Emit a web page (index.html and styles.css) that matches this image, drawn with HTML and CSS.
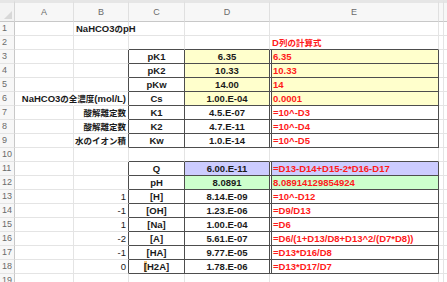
FILE: index.html
```html
<!DOCTYPE html>
<html lang="ja">
<head>
<meta charset="utf-8">
<link rel="stylesheet" href="styles.css">
</head>
<body>
<div class="sheet">
  <div class="corner"><span class="tri"></span></div>
  <div class="hd">A</div><div class="hd">B</div><div class="hd">C</div><div class="hd">D</div><div class="hd">E</div><div class="hd"></div><div class="hd last"></div>

  <div class="rh">1</div><div class="c"></div><div class="c b">NaHCO3<span class="jp">の</span>pH</div><div class="c"></div><div class="c"></div><div class="c"></div><div class="c"></div><div class="c last"></div>

  <div class="rh">2</div><div class="c"></div><div class="c"></div><div class="c bb"></div><div class="c bb"></div><div class="c b red bb">D<span class="jp">列の計算式</span></div><div class="c"></div><div class="c last"></div>

  <div class="rh">3</div><div class="c"></div><div class="c br"></div><div class="c bx b ctr">pK1</div><div class="c bx b ctr yel">6.35</div><div class="c ex b red yel">6.35</div><div class="c"></div><div class="c last"></div>
  <div class="rh">4</div><div class="c"></div><div class="c br"></div><div class="c bx b ctr">pK2</div><div class="c bx b ctr yel">10.33</div><div class="c ex b red yel">10.33</div><div class="c"></div><div class="c last"></div>
  <div class="rh">5</div><div class="c"></div><div class="c br"></div><div class="c bx b ctr">pKw</div><div class="c bx b ctr yel">14.00</div><div class="c ex b red yel">14</div><div class="c"></div><div class="c last"></div>
  <div class="rh">6</div><div class="c hide"></div><div class="c br b rt"><span>NaHCO3<span class="jp">の全濃度</span>(mol/L)</span></div><div class="c bx b ctr">Cs</div><div class="c bx b ctr yel">1.00.E-04</div><div class="c ex b red yel">0.0001</div><div class="c"></div><div class="c last"></div>
  <div class="rh">7</div><div class="c"></div><div class="c br b rt"><span class="jp">酸解離定数</span></div><div class="c bx b ctr">K1</div><div class="c bx b ctr">4.5.E-07</div><div class="c ex b red">=10^-D3</div><div class="c"></div><div class="c last"></div>
  <div class="rh">8</div><div class="c"></div><div class="c br b rt"><span class="jp">酸解離定数</span></div><div class="c bx b ctr">K2</div><div class="c bx b ctr">4.7.E-11</div><div class="c ex b red">=10^-D4</div><div class="c"></div><div class="c last"></div>
  <div class="rh">9</div><div class="c"></div><div class="c br b rt"><span class="jp">水のイオン積</span></div><div class="c bx b ctr">Kw</div><div class="c bx b ctr">1.0.E-14</div><div class="c ex b red">=10^-D5</div><div class="c"></div><div class="c last"></div>

  <div class="rh">10</div><div class="c"></div><div class="c"></div><div class="c bb"></div><div class="c bb"></div><div class="c bb"></div><div class="c"></div><div class="c last"></div>

  <div class="rh">11</div><div class="c"></div><div class="c br"></div><div class="c bx b ctr">Q</div><div class="c bx b ctr lav">6.00.E-11</div><div class="c ex b red lav">=D13-D14+D15-2*D16-D17</div><div class="c"></div><div class="c last"></div>
  <div class="rh">12</div><div class="c"></div><div class="c br"></div><div class="c bx b ctr">pH</div><div class="c bx b ctr grn">8.0891</div><div class="c ex b red grn">8.08914129854924</div><div class="c"></div><div class="c last"></div>
  <div class="rh">13</div><div class="c"></div><div class="c br rt"><span>1</span></div><div class="c bx b ctr">[H]</div><div class="c bx b ctr">8.14.E-09</div><div class="c ex b red">=10^-D12</div><div class="c"></div><div class="c last"></div>
  <div class="rh">14</div><div class="c"></div><div class="c br rt"><span>-1</span></div><div class="c bx b ctr">[OH]</div><div class="c bx b ctr">1.23.E-06</div><div class="c ex b red">=D9/D13</div><div class="c"></div><div class="c last"></div>
  <div class="rh">15</div><div class="c"></div><div class="c br rt"><span>1</span></div><div class="c bx b ctr">[Na]</div><div class="c bx b ctr">1.00.E-04</div><div class="c ex b red">=D6</div><div class="c"></div><div class="c last"></div>
  <div class="rh">16</div><div class="c"></div><div class="c br rt"><span>-2</span></div><div class="c bx b ctr">[A]</div><div class="c bx b ctr">5.61.E-07</div><div class="c ex b red">=D6/(1+D13/D8+D13^2/(D7*D8))</div><div class="c"></div><div class="c last"></div>
  <div class="rh">17</div><div class="c"></div><div class="c br rt"><span>-1</span></div><div class="c bx b ctr">[HA]</div><div class="c bx b ctr">9.77.E-05</div><div class="c ex b red">=D13*D16/D8</div><div class="c"></div><div class="c last"></div>
  <div class="rh">18</div><div class="c"></div><div class="c br rt"><span>0</span></div><div class="c bx b ctr"><span class="mark">[</span>H2A]</div><div class="c bx b ctr">1.78.E-06</div><div class="c ex b red">=D13*D17/D7</div><div class="c"></div><div class="c last"></div>
  <div class="rh">19</div><div class="c"></div><div class="c"></div><div class="c"></div><div class="c"></div><div class="c"></div><div class="c"></div><div class="c last"></div>
</div>
</body>
</html>
```
FILE: styles.css
```css
html, body {
  margin: 0;
  padding: 0;
  background: #ffffff;
}
body {
  width: 447px;
  height: 282px;
  overflow: hidden;
}
.sheet {
  display: grid;
  grid-template-columns: 15px 59px 55px 56px 85px 169px 5px 1fr;
  grid-template-rows: 22px;
  grid-auto-rows: 14px;
  font-family: "Liberation Sans", "Noto Sans CJK JP", sans-serif;
  font-size: 9.5px;
  color: #1a1a1a;
}
.jp {
  font-family: "Noto Sans CJK JP", sans-serif;
  font-size: 8.5px;
}
.corner {
  position: relative;
  background: #f3f3f3;
  border-top: 3px solid #e6e6e6;
  border-right: 1px solid #d6d6d6;
  border-bottom: 1px solid #c8c8c8;
}
.tri {
  position: absolute;
  right: 2px;
  bottom: 2px;
  width: 0;
  height: 0;
  border-left: 8px solid transparent;
  border-bottom: 8px solid #d8d8d8;
}
.hd {
  background: #f7f7f7;
  border-top: 3px solid #e6e6e6;
  border-right: 1px solid #e0e0e0;
  border-bottom: 1px solid #c8c8c8;
  color: #6b6b6b;
  font-size: 9px;
  text-align: center;
  line-height: 18px;
}
.rh {
  background: #f7f7f7;
  border-right: 1px solid #c8c8c8;
  border-bottom: 1px solid #e4e4e4;
  color: #6b6b6b;
  font-size: 9px;
  line-height: 13px;
  padding-left: 2px;
}
.c {
  border-right: 1px solid #e4e4e4;
  border-bottom: 1px solid #e4e4e4;
  line-height: 13px;
  white-space: nowrap;
  padding: 0 2px;
  min-width: 0;
}
.last { border-right: none; }
.hd.last { border-right: none; }
.b { font-weight: bold; }
.ctr { text-align: center; }
.rt {
  display: flex;
  justify-content: flex-end;
  padding-right: 2px;
}
.red { color: #ff1a1a; }
.bb { border-bottom-color: #4d4d4d; }
.br { border-right-color: #4d4d4d; }
.bx {
  border-right-color: #4d4d4d;
  border-bottom-color: #4d4d4d;
}
.ex {
  border-right-color: #4d4d4d;
  border-bottom-color: #4d4d4d;
  box-shadow: inset 1px 0 0 #ffffff, inset 2px 0 0 #4d4d4d;
  padding-left: 3px;
}
.hide { border-right-color: transparent; }
.mark { background: #f6c77c; }
.yel { background: #ffffcc; }
.lav { background: #ccccff; }
.grn { background: #ccffcc; }
```
